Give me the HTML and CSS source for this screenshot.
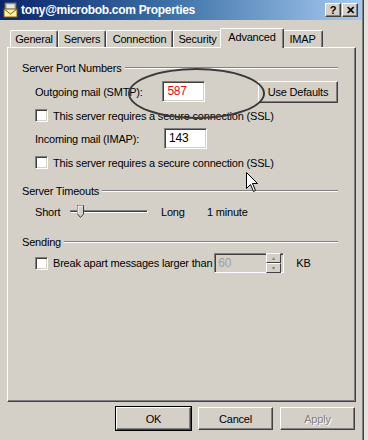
FILE: index.html
```html
<!DOCTYPE html>
<html lang="en">
<head>
    <meta charset="UTF-8">
    <title>tony@microbob.com Properties</title>
    <link rel="stylesheet" href="styles.css">
</head>
<body>

    <div class="window">
        <div class="titlebar">
            <svg class="app-icon" width="16" height="16" viewBox="0 0 16 16">
                <rect x="2" y="1" width="11" height="7" fill="#c0c0c0" stroke="#606060"/>
                <rect x="4" y="2.5" width="7" height="4" fill="#e8e8e8"/>
                <rect x="1" y="7" width="13" height="8" fill="#fff2a8" stroke="#806000"/>
                <path d="M1 7 L7.5 12 L14 7" fill="none" stroke="#806000"/>
            </svg>
            <span class="title">tony@microbob.com Properties</span>
            <div class="caption-buttons">
                <span class="cap-btn">?</span>
                <span class="cap-btn">&#x2715;</span>
            </div>
        </div>

        <div class="dialog">
            <div class="tabs">
                <span class="tab tab-general">General</span>
                <span class="tab tab-servers">Servers</span>
                <span class="tab tab-connection">Connection</span>
                <span class="tab tab-security">Security</span>
                <span class="tab tab-advanced active">Advanced</span>
                <span class="tab tab-imap">IMAP</span>
            </div>

            <div class="panel">
                <div class="group-title first"><span>Server Port Numbers</span></div>

                <div class="row field-row">
                    <span class="label">Outgoing mail (SMTP):</span>
                    <span class="textbox port red">587</span>
                    <span class="button defaults">Use Defaults</span>
                </div>
                <div class="row check-row">
                    <span class="checkbox"></span>
                    <span>This server requires a secure connection (SSL)</span>
                </div>

                <div class="row field-row">
                    <span class="label">Incoming mail (IMAP):</span>
                    <span class="textbox port">143</span>
                </div>
                <div class="row check-row">
                    <span class="checkbox"></span>
                    <span>This server requires a secure connection (SSL)</span>
                </div>

                <div class="group-title timeouts"><span>Server Timeouts</span></div>
                <div class="row slider-row">
                    <span class="short">Short</span>
                    <span class="slider">
                        <span class="track"></span>
                        <svg class="thumb" width="7" height="13" viewBox="0 0 7 13">
                            <path d="M0.5 0.5 H6.5 V9 L3.5 12.5 L0.5 9 Z" fill="#d4d0c8" stroke="#404040"/>
                            <path d="M1 9 V1 H6" fill="none" stroke="#ffffff"/>
                        </svg>
                    </span>
                    <span class="long">Long</span>
                    <span>1 minute</span>
                </div>

                <div class="group-title sending"><span>Sending</span></div>
                <div class="row break-row">
                    <span class="checkbox"></span>
                    <span>Break apart messages larger than</span>
                    <span class="textbox spin disabled">
                        <span class="spin-value">60</span>
                        <span class="spin-buttons">
                            <span class="spin-btn">&#9652;</span>
                            <span class="spin-btn">&#9662;</span>
                        </span>
                    </span>
                    <span class="kb">KB</span>
                </div>

                <div class="ellipse"></div>
                <svg class="cursor" width="13" height="21" viewBox="0 0 13 21">
                    <path d="M0.5 0.5 V16.5 L4.5 12.5 L7.5 19.5 L9.5 18.5 L6.5 11.5 H11.5 Z" fill="#ffffff" stroke="#000000"/>
                </svg>
            </div>

            <div class="actions">
                <span class="button default">OK</span>
                <span class="button">Cancel</span>
                <span class="button disabled">Apply</span>
            </div>
        </div>
    </div>

</body>
</html>
```

FILE: styles.css
```css
body {
    margin: 0;
    background-color: #e4e2dc;
    font-family: 'Liberation Sans', Arial, sans-serif;
    font-size: 11px;
    letter-spacing: -0.2px;
    color: #000;
}

.window {
    width: 363px;
    height: 440px;
    background-color: #d4d0c8;
    border-right: 1px solid #404040;
    box-shadow: inset -1px 0 #808080;
    overflow: hidden;
}

/* title bar */

.titlebar {
    height: 20px;
    margin-right: 1px;
    background: linear-gradient(to right, #0a246a, #3a6ea5 45%, #a6caf0);
    display: flex;
    align-items: center;
    color: #fff;
}

.app-icon {
    margin: 0 2px 0 3px;
}

.title {
    font-weight: bold;
    font-size: 12px;
    letter-spacing: -0.3px;
    flex: 1;
}

.caption-buttons {
    display: flex;
    gap: 1px;
    margin-right: 4px;
}

.cap-btn {
    width: 14px;
    height: 12px;
    background-color: #d4d0c8;
    border-top: 1px solid #fff;
    border-left: 1px solid #fff;
    border-right: 1px solid #404040;
    border-bottom: 1px solid #404040;
    box-shadow: inset -1px -1px #808080;
    color: #000;
    font-weight: bold;
    font-size: 11px;
    line-height: 12px;
    text-align: center;
}

/* tabs */

.dialog {
    padding: 0 0 0 7px;
}

.tabs {
    display: flex;
    align-items: flex-end;
    height: 27px;
    padding-left: 3px;
}

.tab {
    height: 16px;
    line-height: 16px;
    text-align: center;
    background-color: #d4d0c8;
    border-top: 1px solid #fff;
    border-left: 1px solid #fff;
    border-right: 1px solid #404040;
    box-shadow: inset -1px 0 #808080;
    border-radius: 2px 2px 0 0;
}

.tab-general { width: 46px; }
.tab-servers { width: 46px; }
.tab-connection { width: 65px; }
.tab-security { width: 47px; }
.tab-imap { width: 39px; }

.tab.active {
    width: 62px;
    height: 19px;
    line-height: 17px;
    margin: 0 -1px -1px -2px;
    position: relative;
    z-index: 1;
}

.tab.active + .tab {
    margin-left: -1px;
}

/* panel */

.panel {
    position: relative;
    box-sizing: content-box;
    width: 316px;
    height: 353px;
    border-top: 1px solid #fff;
    border-left: 1px solid #fff;
    border-right: 1px solid #404040;
    border-bottom: 1px solid #404040;
    box-shadow: inset -1px -1px #808080;
    padding: 0 17px 0 14px;
}

.group-title {
    display: flex;
    align-items: center;
    height: 14px;
    gap: 3px;
}

.group-title::after {
    content: "";
    flex: 1;
    border-top: 1px solid #808080;
    border-bottom: 1px solid #fff;
}

.group-title.first { margin-top: 13px; }
.group-title.timeouts { margin-top: 15px; }
.group-title.sending { margin-top: 13px; }

.row {
    display: flex;
    align-items: center;
    padding-left: 13px;
}

.field-row {
    height: 21px;
    margin-top: 6px;
}

.field-row .label {
    width: 129px;
}

.check-row {
    height: 13px;
    margin-top: 7px;
}

.slider-row {
    height: 20px;
    margin-top: 4px;
}

.break-row {
    height: 20px;
    margin-top: 4px;
}

/* controls */

.textbox {
    box-sizing: border-box;
    height: 21px;
    background-color: #fff;
    border-top: 1px solid #808080;
    border-left: 1px solid #808080;
    border-right: 1px solid #fff;
    border-bottom: 1px solid #fff;
    box-shadow: inset 1px 1px #404040, inset -1px -1px #d4d0c8;
    padding: 0 4px;
    line-height: 19px;
    font-size: 12px;
}

.port {
    width: 43px;
}

.red {
    color: #e01010;
}

.checkbox {
    box-sizing: border-box;
    width: 13px;
    height: 13px;
    background-color: #fff;
    border-top: 1px solid #808080;
    border-left: 1px solid #808080;
    border-right: 1px solid #fff;
    border-bottom: 1px solid #fff;
    box-shadow: inset 1px 1px #404040, inset -1px -1px #d4d0c8;
    margin-right: 5px;
}

.button {
    box-sizing: border-box;
    display: inline-flex;
    justify-content: center;
    align-items: center;
    width: 75px;
    height: 23px;
    background-color: #d4d0c8;
    border-top: 1px solid #fff;
    border-left: 1px solid #fff;
    border-right: 1px solid #404040;
    border-bottom: 1px solid #404040;
    box-shadow: inset -1px -1px #808080;
}

.defaults {
    width: 81px;
    height: 22px;
    margin-left: 53px;
}

.button.default {
    outline: 1px solid #000;
    outline-offset: 0;
}

.button.disabled {
    color: #808080;
    text-shadow: 1px 1px #fff;
}

/* slider */

.short {
    width: 35px;
}

.slider {
    position: relative;
    width: 78px;
    height: 20px;
}

.track {
    position: absolute;
    left: 0;
    right: 0;
    top: 8px;
    height: 1px;
    border-top: 1px solid #808080;
    border-left: 1px solid #808080;
    border-bottom: 1px solid #fff;
    border-right: 1px solid #fff;
    background-color: #404040;
}

.thumb {
    position: absolute;
    left: 7px;
    top: 3px;
}

.long {
    margin-left: 13px;
    width: 46px;
}

/* spin box */

.spin {
    display: flex;
    align-items: center;
    width: 70px;
    height: 20px;
    margin-left: 2px;
    padding: 0 2px 0 3px;
    background-color: #d4d0c8;
}

.spin-value {
    flex: 1;
    color: #a0a0a0;
    line-height: 18px;
}

.spin-buttons {
    display: flex;
    flex-direction: column;
    width: 15px;
}

.spin-btn {
    height: 8px;
    background-color: #d4d0c8;
    border-top: 1px solid #fff;
    border-left: 1px solid #fff;
    border-right: 1px solid #404040;
    border-bottom: 1px solid #404040;
    font-size: 6px;
    line-height: 8px;
    text-align: center;
    color: #808080;
    overflow: hidden;
}

.kb {
    margin-left: 12px;
}

/* overlays */

.ellipse {
    position: absolute;
    left: 120px;
    top: 20px;
    width: 133px;
    height: 47px;
    border: 2px solid #3a3a3a;
    border-radius: 50%;
}

.cursor {
    position: absolute;
    left: 238px;
    top: 124px;
}

/* bottom buttons */

.actions {
    display: flex;
    justify-content: flex-end;
    gap: 7px;
    margin: 5px 8px 0 0;
}
```
